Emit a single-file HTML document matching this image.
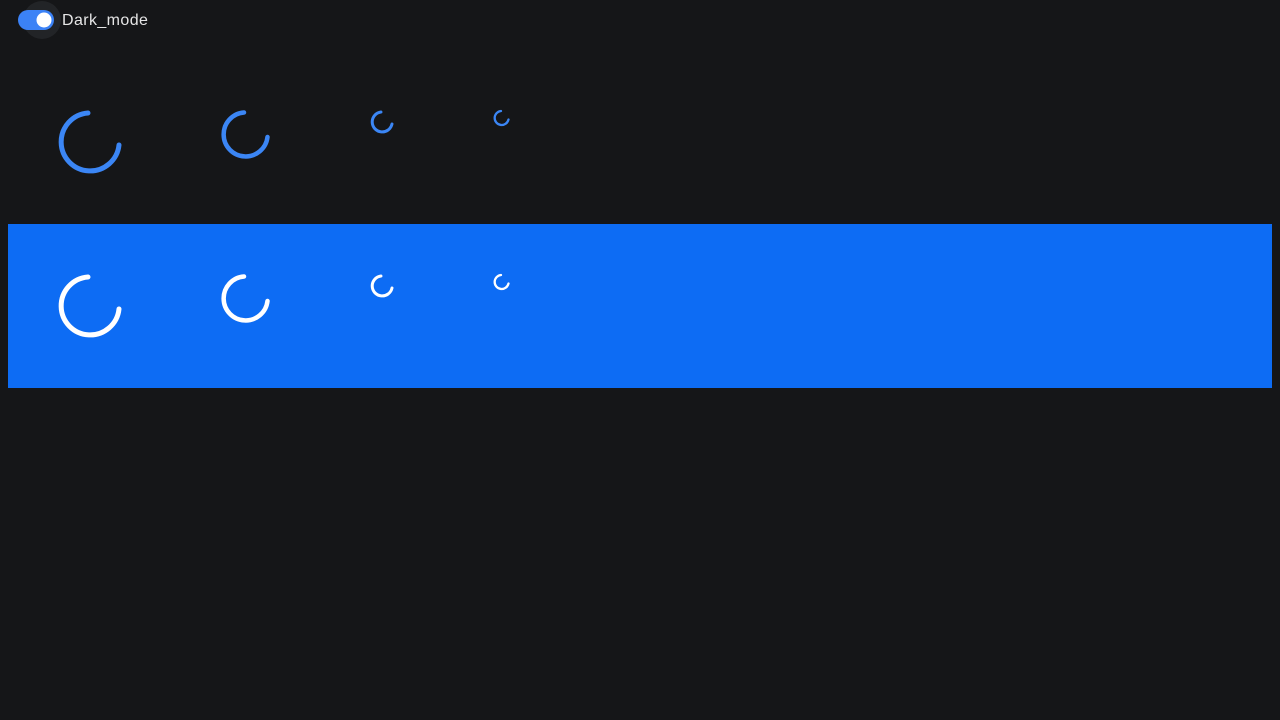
<!DOCTYPE html>
<html><head><style>
html,body{margin:0;padding:0;background:#151618;width:1280px;height:720px;overflow:hidden;font-family:"Liberation Sans",sans-serif}
.band{position:absolute;left:8px;top:224px;width:1264px;height:164px;background:#0d6cf4}
.lbl{position:absolute;left:62px;top:11px;color:#e6e6e6;font-size:16px;line-height:20px;letter-spacing:0.4px}
svg{position:absolute;left:0;top:0}
</style></head><body>
<div class="band"></div>
<div class="lbl">Dark_mode</div>
<svg width="1280" height="720">
<circle cx="42" cy="20" r="19" fill="#222427"/>
<rect x="18" y="10" width="36" height="20" rx="10" fill="#3b82f6"/>
<circle cx="44" cy="20" r="7.5" fill="#fff"/>
<g fill="none" stroke="#3b86f5" stroke-linecap="round">
<path d="M88 113 A29 29 0 1 0 119 145" stroke-width="5"/>
<path d="M244 112.5 A22 22 0 1 0 267.5 137" stroke-width="4.5"/>
<path d="M381 112 A10 10 0 1 0 392 124" stroke-width="3"/>
<path d="M501 111 A7 7 0 1 0 508.5 119.5" stroke-width="2.3"/>
</g>
<g fill="none" stroke="#ffffff" stroke-linecap="round">
<path d="M88 277 A29 29 0 1 0 119 309" stroke-width="5"/>
<path d="M244 276.5 A22 22 0 1 0 267.5 301" stroke-width="4.5"/>
<path d="M381 276 A10 10 0 1 0 392 288" stroke-width="3"/>
<path d="M501 275 A7 7 0 1 0 508.5 283.5" stroke-width="2.3"/>
</g>
</svg>
</body></html>
